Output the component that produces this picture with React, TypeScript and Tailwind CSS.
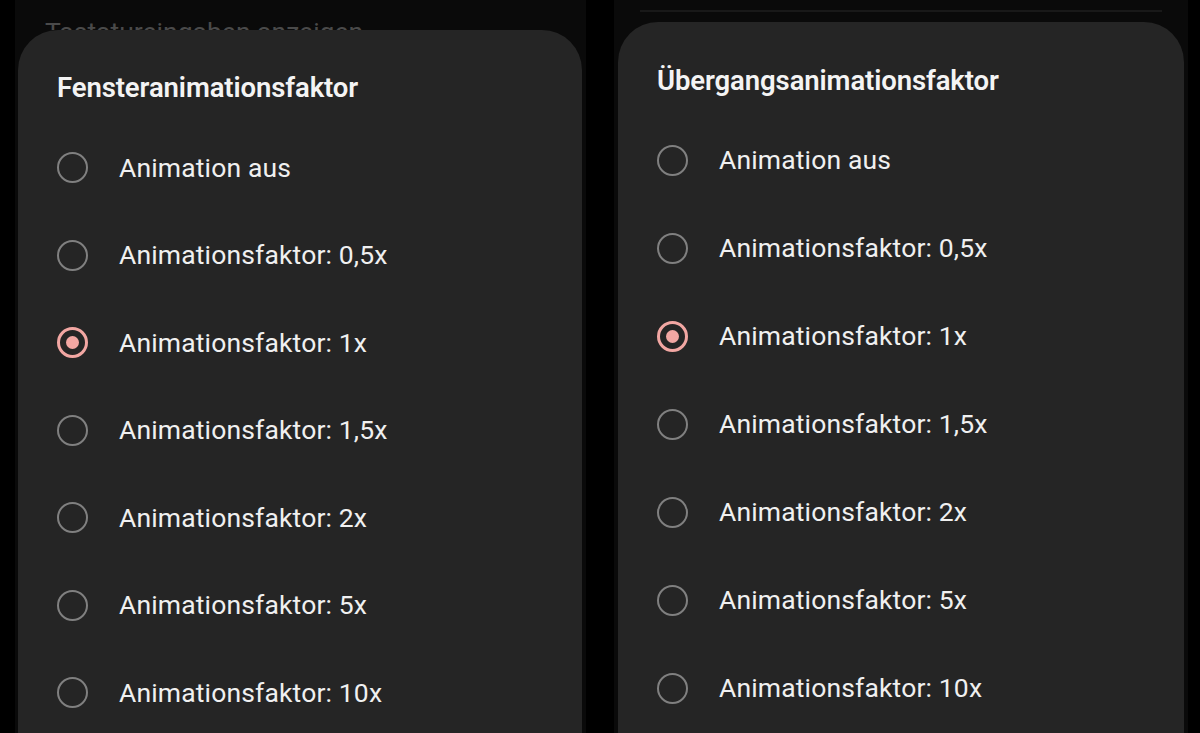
import React from "react";

const options = [
  "Animation aus",
  "Animationsfaktor: 0,5x",
  "Animationsfaktor: 1x",
  "Animationsfaktor: 1,5x",
  "Animationsfaktor: 2x",
  "Animationsfaktor: 5x",
  "Animationsfaktor: 10x",
];

function Radio({ checked }: { checked: boolean }) {
  if (checked) {
    return (
      <div className="w-[31px] h-[31px] rounded-full border-[3px] border-[#f2a7a3] flex items-center justify-center">
        <div className="w-[13px] h-[13px] rounded-full bg-[#f2a7a3]" />
      </div>
    );
  }
  return <div className="w-[31px] h-[31px] rounded-full border-[2.5px] border-[#808080]" />;
}

function AnimationDialog({ title, rowClass, listClass, topClass }: { title: string; rowClass: string; listClass: string; topClass: string }) {
  return (
    <div className={`bg-[#252525] rounded-t-[40px] pl-[39px] flex-1 ${topClass}`}>
      <h2 className="text-[27.5px] leading-[32px] font-semibold text-[#f4f4f4] tracking-[-0.1px]">{title}</h2>
      <div className={listClass}>
        {options.map((label, i) => (
          <div key={label} className={`flex items-center ${rowClass}`}>
            <Radio checked={i === 2} />
            <span className="ml-[31px] text-[26.5px] tracking-[0.15px] text-[#f0f0f0]">{label}</span>
          </div>
        ))}
      </div>
    </div>
  );
}

export default function App() {
  return (
    <div
      className="w-[1200px] h-[733px] overflow-hidden bg-black flex pl-[15px]"
      style={{ fontFamily: "Roboto, 'Noto Sans', sans-serif" }}
    >
      {/* linker Bildschirm */}
      <div className="w-[571px] bg-[#0a0a0a] flex flex-col px-[3px]">
        <div className="h-[30px] shrink-0 overflow-hidden pl-[27px] pt-[16px]">
          <p className="text-[26.5px] leading-[32px] text-[#4a4a4a]">Tastatureingaben anzeigen</p>
        </div>
        <div className="flex-1 flex pr-[1px]">
          <AnimationDialog
            title="Fensteranimationsfaktor"
            topClass="pt-[42px]"
            rowClass="h-[87.5px]"
            listClass="mt-[20px]"
          />
        </div>
      </div>

      <div className="w-[28px]" />

      {/* rechter Bildschirm */}
      <div className="w-[574px] bg-[#0a0a0a] flex flex-col pl-[4px] pr-[4px]">
        <div className="h-[22px] shrink-0 pt-[10px] px-[22px]">
          <div className="h-[2px] bg-[#191919]" />
        </div>
        <div className="flex-1 flex">
          <AnimationDialog
            title="Übergangsanimationsfaktor"
            topClass="pt-[43px]"
            rowClass="h-[88px]"
            listClass="mt-[19px]"
          />
        </div>
      </div>
    </div>
  );
}
